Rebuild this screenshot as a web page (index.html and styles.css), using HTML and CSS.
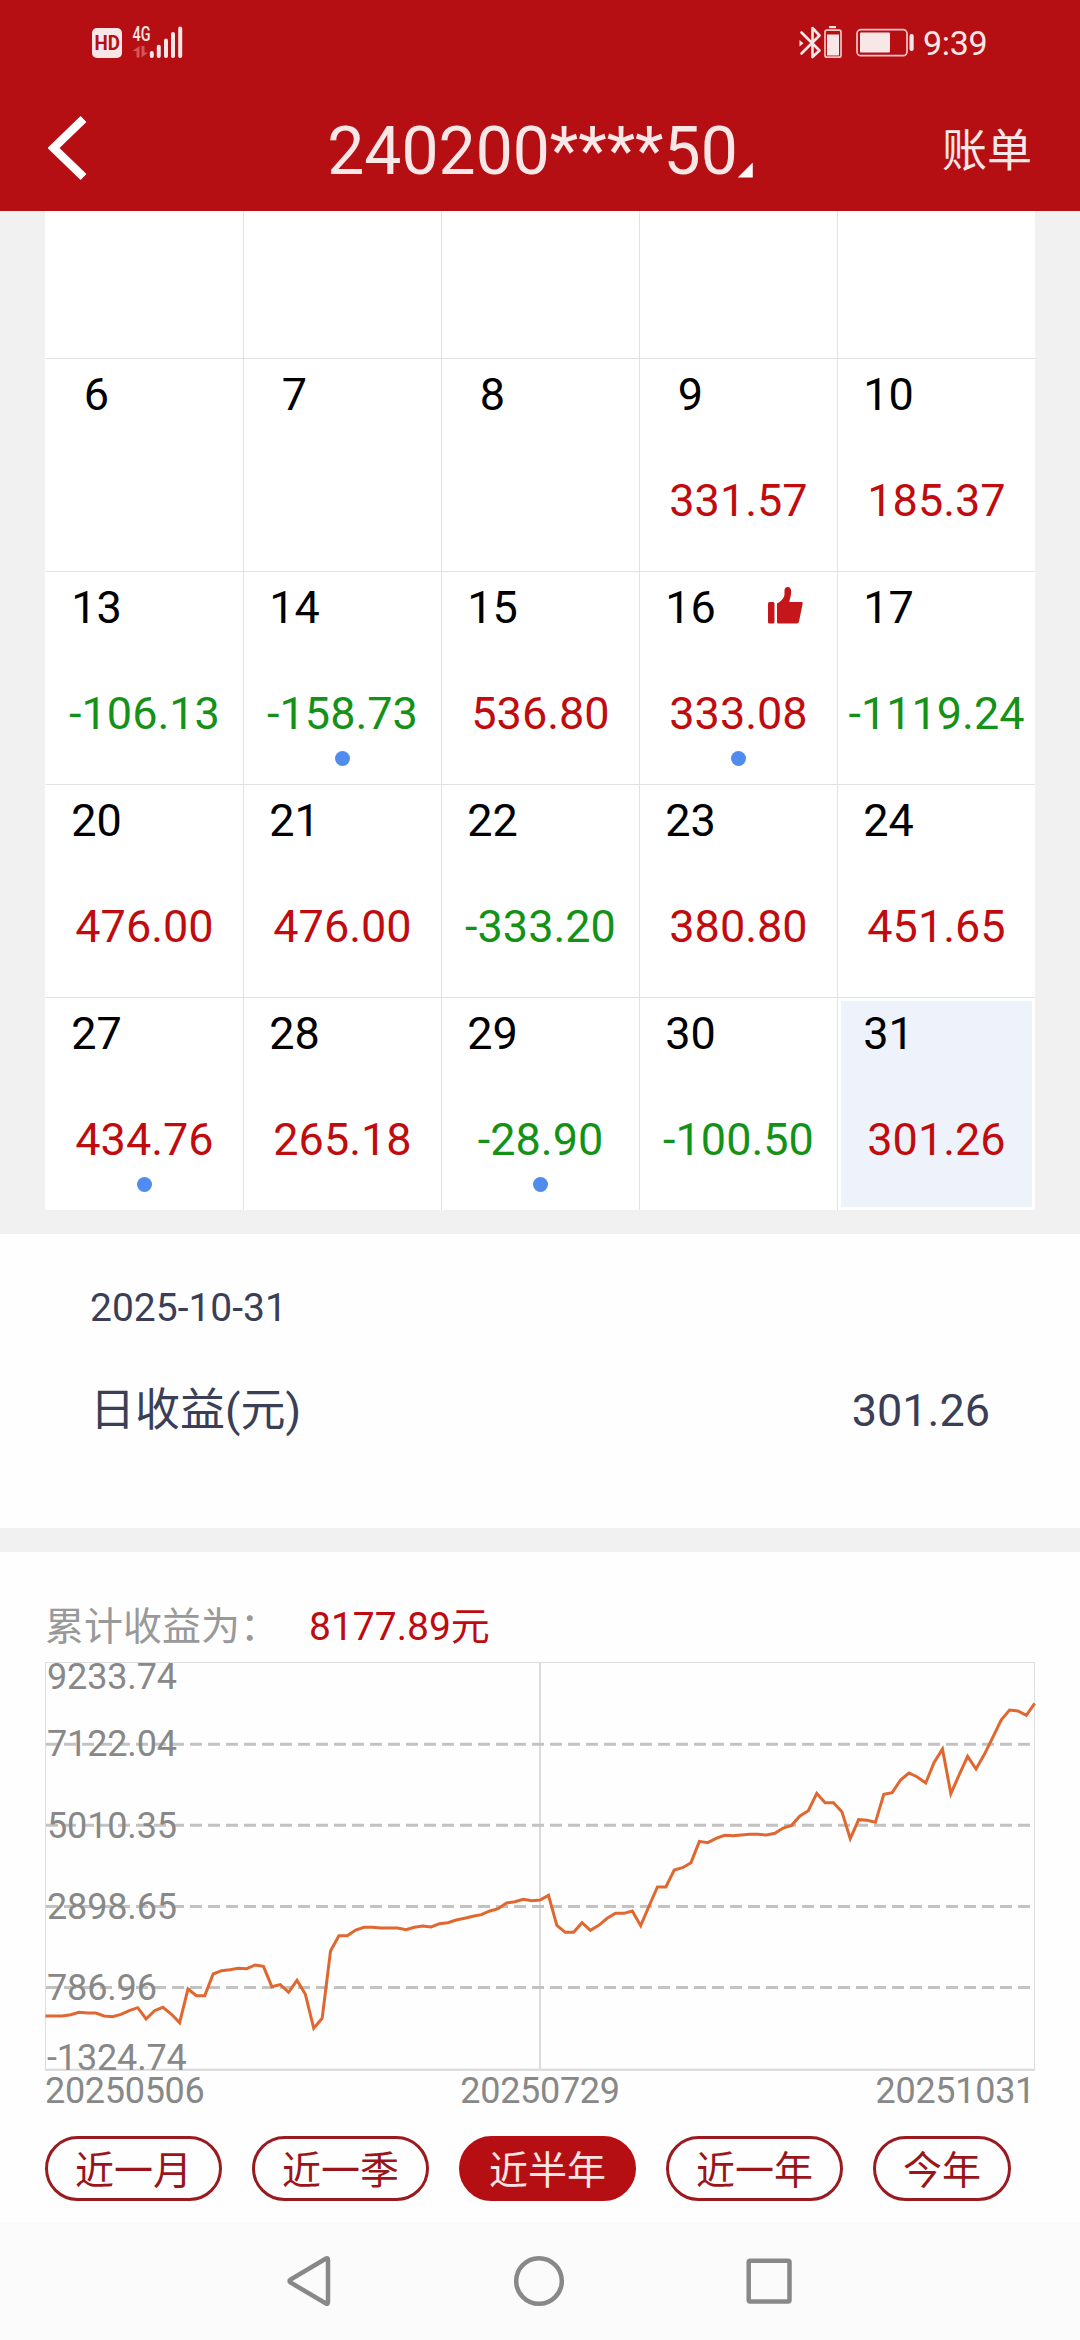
FILE: index.html
```html
<!DOCTYPE html>
<html lang="zh-CN">
<head>
<meta charset="utf-8">
<title>账单</title>
<link rel="stylesheet" href="styles.css">
</head>
<body>
<header class="header">
  <div class="status">
    <svg class="status-left" width="94" height="36" viewBox="90 24 94 36">
      <rect class="tint" x="92" y="28" width="30" height="30" rx="5"/>
      <text class="hd" x="94.5" y="50" textLength="25.5" lengthAdjust="spacingAndGlyphs">HD</text>
      <text class="net" x="132.5" y="41" textLength="18" lengthAdjust="spacingAndGlyphs">4G</text>
      <path class="faint" d="M139.5 46v11.5h-3V51h-4zM141.500 46h3v6.500h3.500l-6.500 5z"/>
      <g class="bars">
        <path d="M151.800 53v3"/><path d="M158.800 46.800v9.200"/><path d="M166 40.500v15.500"/><path d="M173 34v22"/><path d="M180.200 28.500v27.500"/>
      </g>
    </svg>
    <div class="status-right">
      <svg width="116" height="36" viewBox="798 24 116 36">
        <path class="line bt" d="M801.500 32.500 819.500 50.500 812.500 57V28L819.500 35.500 801.500 53.500"/>
        <path class="tint" d="M799.500 40l4 3.200-4 3.200z"/>
        <path class="tint" d="M829 26h7v2.200h-7z"/>
        <rect class="thin" x="825" y="30.200" width="16" height="27" rx="2"/>
        <rect class="tint" x="827" y="34.500" width="12" height="21"/>
        <rect class="thin" x="857" y="29.700" width="50" height="26" rx="4"/>
        <rect class="tint" x="860" y="32.500" width="30" height="20" rx="1"/>
        <rect class="tint" x="909.500" y="34" width="4.200" height="17" rx="2"/>
      </svg>
      <span class="clock">9:39</span>
    </div>
  </div>
  <div class="titlebar">
    <svg class="back" width="40" height="66" viewBox="48 115 40 66"><path d="M83.500 119 53.500 148 83.500 177"/></svg>
    <h1 class="title">240200****50<i class="corner"></i></h1>
    <span class="bill">账单</span>
  </div>
</header>

<main>
  <section class="calendar">
    <div class="cell first"></div><div class="cell first"></div><div class="cell first"></div><div class="cell first"></div><div class="cell first"></div>

    <div class="cell"><div class="day"><b>6</b></div></div>
    <div class="cell"><div class="day"><b>7</b></div></div>
    <div class="cell"><div class="day"><b>8</b></div></div>
    <div class="cell"><div class="day"><b>9</b></div><span class="up">331.57</span></div>
    <div class="cell"><div class="day"><b>10</b></div><span class="up">185.37</span></div>

    <div class="cell"><div class="day"><b>13</b></div><span class="down">-106.13</span></div>
    <div class="cell"><div class="day"><b>14</b></div><span class="down">-158.73</span><i class="dot"></i></div>
    <div class="cell"><div class="day"><b>15</b></div><span class="up">536.80</span></div>
    <div class="cell"><div class="day"><b>16</b><svg class="thumb" width="35" height="37" viewBox="0 0 35 37"><rect x="0" y="15" width="6.500" height="21.500" rx="1.500"/><path d="M9 16.500c3.800-1.700 7.500-5.500 7.500-9.500V3.500C16.500 1 18 0 19.800 0c2 0 3.400 1.500 3.400 4.500 0 4-1.400 7-1.900 10.500H33.500c1 0 1.400.6 1.200 1.500L31 34.500c-.3 1.300-1 2-2.200 2H10.500c-1 0-1.500-.5-1.500-1.500z"/></svg></div><span class="up">333.08</span><i class="dot"></i></div>
    <div class="cell"><div class="day"><b>17</b></div><span class="down">-1119.24</span></div>

    <div class="cell"><div class="day"><b>20</b></div><span class="up">476.00</span></div>
    <div class="cell"><div class="day"><b>21</b></div><span class="up">476.00</span></div>
    <div class="cell"><div class="day"><b>22</b></div><span class="down">-333.20</span></div>
    <div class="cell"><div class="day"><b>23</b></div><span class="up">380.80</span></div>
    <div class="cell"><div class="day"><b>24</b></div><span class="up">451.65</span></div>

    <div class="cell"><div class="day"><b>27</b></div><span class="up">434.76</span><i class="dot"></i></div>
    <div class="cell"><div class="day"><b>28</b></div><span class="up">265.18</span></div>
    <div class="cell"><div class="day"><b>29</b></div><span class="down">-28.90</span><i class="dot"></i></div>
    <div class="cell"><div class="day"><b>30</b></div><span class="down">-100.50</span></div>
    <div class="cell selected"><div class="day"><b>31</b></div><span class="up">301.26</span></div>
  </section>

  <section class="daily">
    <div class="date">2025-10-31</div>
    <div class="income"><span>日收益(元)</span><span>301.26</span></div>
  </section>

  <section class="total">
    <div class="sum"><span class="sum-label">累计收益为：</span><span class="sum-value">8177.89元</span></div>
    <svg class="chart" width="990" height="409" viewBox="45 1662 990 409">
      <path class="frame" d="M45.500 2070V1662.500H1034.500V2070"/>
      <path class="base" d="M45 2069.700H1035"/>
      <path class="mid" d="M540 1662V2070"/>
      <path class="grid" d="M46 1744.200H1034M46 1825.300H1034M46 1906.500H1034M46 1987.600H1034"/>
      <g class="scale">
        <text x="47" y="1689">9233.74</text>
        <text x="47" y="1756">7122.04</text>
        <text x="47" y="1838">5010.35</text>
        <text x="47" y="1919">2898.65</text>
        <text x="47" y="2000">786.96</text>
        <text x="47" y="2070">-1324.74</text>
      </g>
      <polyline class="curve" transform="translate(45.500 1640) scale(8.383 .33333)" points="0,1128 1,1128 2,1128 3,1124 4,1117 5,1119 6,1119 7,1128 8,1130 9,1123 10,1112 11,1103 12,1137 13,1112 14,1102 15,1122 16,1148 17,1047 18,1067 19,1067 20,1002 21,992 22,989 23,985 24,986 25,975 26,979 27,1040 28,1034 29,1057 30,1021 31,1063 32,1165 33,1135 34,933 35,887 36,887 37,870 38,862 39,862 40,864 41,864 42,864 43,869 44,862 45,858 46,861 47,851 48,848 49,840 50,835 51,829 52,824 53,813 54,806 55,789 56,785 57,778 58,782 59,780 60,766 61,856 62,877 63,877 64,848 65,871 66,856 67,835 68,820 69,820 70,813 71,857 72,798 73,741 74,741 75,690 76,683 77,668 78,604 79,608 80,595 81,586 82,587 83,585 84,583 85,583 86,585 87,580 88,564 89,556 90,528 91,512 92,460 93,488 94,488 95,515 96,596 97,539 98,541 99,547 100,463 101,458 102,420 103,399 104,411 105,429 106,367 107,327 108,461 109,404 110,349 111,387 112,343 113,292 114,240 115,210 116,213 117,226 118,190"/>
    </svg>
    <div class="axis"><span>20250506</span><span>20250729</span><span>20251031</span></div>
    <div class="tabs">
      <span class="tab">近一月</span><span class="tab">近一季</span><span class="tab active">近半年</span><span class="tab">近一年</span><span class="tab">今年</span>
    </div>
  </section>
</main>

<footer class="nav">
  <svg width="48" height="54" viewBox="285 2254 48 54"><path d="M326 2258.500q2-1 2 1.500v42q0 2.500-2 1.500L290.500 2282.500q-2-1.500 0-3z"/></svg>
  <svg width="54" height="54" viewBox="513 2254 54 54"><circle cx="540" cy="2281" r="22.800"/></svg>
  <svg width="48" height="54" viewBox="745 2254 48 54"><rect x="748.700" y="2260.700" width="40.800" height="40.800" rx="1.500"/></svg>
</footer>
</body>
</html>
```
FILE: styles.css
```css
* { box-sizing: border-box; }

body {
  margin: 0;
  width: 1080px;
  height: 2340px;
  overflow: hidden;
  background: #f1f1f1;
  color: #000;
  font-family: Roboto, "Noto Sans CJK SC", sans-serif;
  font-size: 45px;
  line-height: 53px;
}

b, h1 { font-weight: 400; }
svg { display: block; flex: none; }

/* header */
.header {
  height: 211px;
  background: #b50f14;
  color: #f8e7e7;
}

.status {
  display: flex;
  justify-content: space-between;
  height: 92px;
  padding: 24px 92px 0 90px;
}

.tint { fill: #f8e7e7; }
.faint { fill: #d4555a; }
.hd { font: 700 20px Roboto, sans-serif; fill: #b50f14; }
.net { font: 500 20.5px Roboto, sans-serif; fill: #f8e7e7; }
.bars path { stroke: #f8e7e7; stroke-width: 4; stroke-linecap: round; }
.line { fill: none; stroke: #f8e7e7; stroke-width: 2.6; stroke-linejoin: round; stroke-linecap: round; }
.thin { fill: none; stroke: #f3c4c6; stroke-width: 1.7; }
.status-right { display: flex; gap: 9px; }
.clock { font-size: 34px; line-height: 38px; width: 65px; letter-spacing: -.3px; }

.titlebar {
  display: grid;
  grid-template-columns: 150px 1fr 150px;
  align-items: center;
  height: 119px;
  padding: 0 48px;
}

.back path { fill: none; stroke: #fff; stroke-width: 8.4; }
.back { margin-top: -7px; }

.title {
  display: flex;
  justify-content: center;
  margin: 0;
  font-size: 66px;
  line-height: 78px;
}

.corner {
  width: 15px;
  height: 15px;
  margin-top: 50px;
  background: #fff;
  clip-path: polygon(100% 0, 100% 100%, 0 100%);
}

.bill { text-align: right; }

/* calendar */
.calendar {
  display: grid;
  grid-template-columns: repeat(5, 198px);
  grid-template-rows: 147px repeat(4, 213px);
  width: 990px;
  margin: 0 auto 24px;
  background: #fff;
}

.cell {
  display: flex;
  flex-direction: column;
  align-items: center;
  border-left: 1px solid #e2e2e2;
  border-top: 1px solid #e2e2e2;
  padding-top: 9px;
}

.cell:nth-child(5n + 1) { border-left-color: transparent; }
.cell.first { border-top: 0; }

.day {
  display: flex;
  align-self: stretch;
  margin-bottom: 53px;
}

.day b { width: 101px; text-align: center; }
.thumb { margin: 6px 0 0 27px; fill: #c5161c; }
.up { color: #c00c0f; }
.down { color: #149218; }

.dot {
  width: 15px;
  height: 15px;
  margin-top: 11px;
  border-radius: 50%;
  background: #508ced;
}

.selected {
  background: #eef2fa content-box;
  box-shadow: inset 0 0 0 3px #fff;
  background-clip: border-box;
}

/* selected day */
.daily {
  height: 294px;
  margin-bottom: 24px;
  padding: 51px 90px 0;
  background: #fefefe;
  color: #3a3f57;
}

.date { font-size: 39px; line-height: 47px; }

.income {
  display: flex;
  justify-content: space-between;
  margin-top: 52px;
}

/* cumulative income */
.total {
  height: 670px;
  padding: 51px 45px 0;
  background: #fefefe;
}

.sum {
  display: flex;
  gap: 30px;
  height: 59px;
  font-size: 39px;
  line-height: 48px;
}

.sum-label { color: #999; }
.sum-value { color: #bf0b0f; }

.chart { overflow: visible; }
.frame, .base, .mid, .grid, .curve { fill: none; }
.frame { stroke: #dedede; }
.base { stroke: #d8d8d8; stroke-width: 2; }
.mid { stroke: #dcdcdc; stroke-width: 2; }
.grid { stroke: #c2c2c2; stroke-width: 3; stroke-dasharray: 12 6; }
.scale { font-size: 36px; fill: #888; letter-spacing: -.15px; }
.curve { stroke: #e0672f; stroke-width: 3; vector-effect: non-scaling-stroke; }

.axis {
  display: flex;
  justify-content: space-between;
  font-size: 36px;
  line-height: 40px;
  letter-spacing: -.3px;
  color: #888;
}

.tabs {
  display: flex;
  gap: 30px;
  margin-top: 25px;
}

.tab {
  height: 65px;
  padding: 3px 27px 0;
  border: 3px solid #991a1f;
  border-radius: 33px;
  font-size: 39px;
  line-height: 59px;
  color: #991519;
}

.active {
  background: #b50f14;
  border-color: #b50f14;
  color: #fbe4e4;
}

/* system navigation */
.nav {
  display: flex;
  justify-content: space-between;
  height: 118px;
  padding: 32px 287px 0 285px;
  background: #fbfbfb;
}

.nav path, .nav circle, .nav rect {
  fill: none;
  stroke: #888;
  stroke-width: 4.5;
}
```
